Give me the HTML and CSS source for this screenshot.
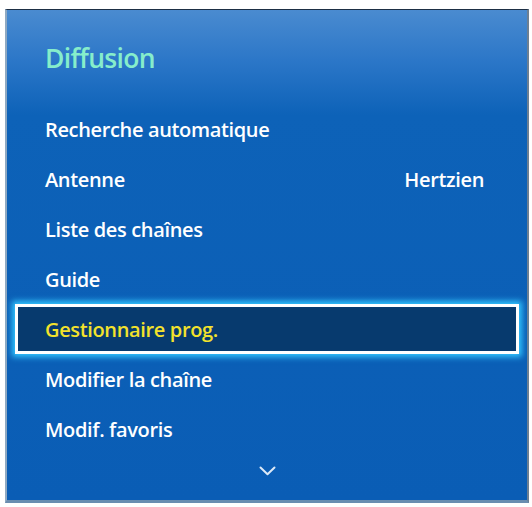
FILE: index.html
```html
<!DOCTYPE html>
<html lang="fr">
<head>
<meta charset="utf-8">
<title>Diffusion</title>
<link rel="stylesheet" href="styles.css">
</head>
<body>
<div class="panel">
  <div class="header"><h1 class="title">Diffusion</h1></div>
  <ul class="menu">
    <li class="item">Recherche automatique</li>
    <li class="item"><span>Antenne</span><span class="value">Hertzien</span></li>
    <li class="item">Liste des chaînes</li>
    <li class="item">Guide</li>
    <li class="item selected">Gestionnaire prog.</li>
    <li class="item">Modifier la chaîne</li>
    <li class="item">Modif. favoris</li>
  </ul>
  <div class="more">
    <svg width="17" height="10" viewBox="0 0 17 10"><polyline points="1.5,1.5 8.5,8.2 15.5,1.5" fill="none" stroke="#dce9f7" stroke-width="2" stroke-linecap="round" stroke-linejoin="round"/></svg>
  </div>
</div>
</body>
</html>
```
FILE: styles.css
```css
html, body {
  margin: 0;
  padding: 0;
  background: #ffffff;
}
body {
  padding: 9px 3px 4px 5px;
  font-family: "Open Sans", "Liberation Sans", sans-serif;
}
.panel {
  width: 524px;
  height: 494px;
  box-sizing: border-box;
  border-top: 1px solid #1d2f45;
  border-left: 2px solid #8fa9c2;
  border-right: 2px solid #6d7f92;
  border-bottom: 3px solid #6a8db0;
  background: linear-gradient(to bottom, #4a8bd0 0px, #2c77c8 50px, #0d62b8 105px, #0a5db5 100%);
  display: flex;
  flex-direction: column;
}
.header {
  height: 94px;
  padding-left: 38px;
  padding-top: 3px;
  box-sizing: border-box;
  display: flex;
  align-items: center;
}
.title {
  margin: 0;
  font-size: 26.5px;
  font-weight: 600;
  color: #86edcb;
  letter-spacing: -0.7px;
  padding-bottom: 2px;
}
.menu {
  list-style: none;
  margin: 0;
  padding: 0;
}
.item {
  height: 50px;
  padding: 0 43px 0 38px;
  display: flex;
  align-items: center;
  justify-content: space-between;
  font-size: 20px;
  font-weight: 600;
  color: #ffffff;
  letter-spacing: -0.35px;
}
.item.selected {
  margin: 0 8px 0 8px;
  padding: 0 32px 0 27px;
  height: 50px;
  box-sizing: border-box;
  border: 3px solid #ffffff;
  background: #073a6e;
  color: #f3e22c;
  box-shadow: 0 0 6px 3px #33c6ff;
}
.more {
  flex: 1;
  display: flex;
  justify-content: center;
  align-items: center;
  padding-bottom: 12px;
}
.more svg {
  display: block;
}
```
